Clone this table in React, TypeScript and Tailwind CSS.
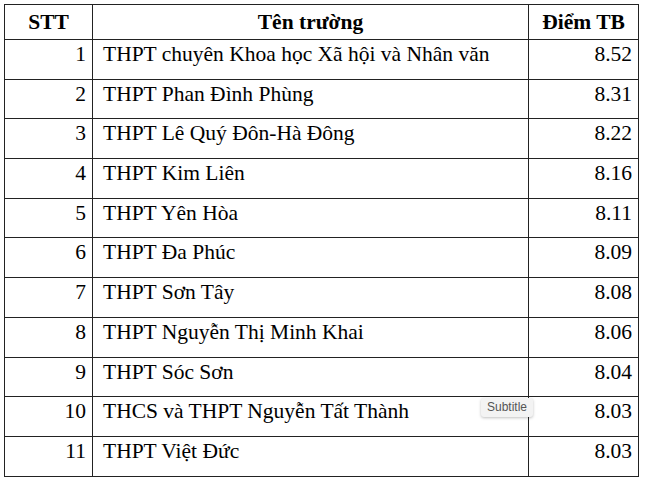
const rows: [number, string, string][] = [
  [1, 'THPT chuyên Khoa học Xã hội và Nhân văn', '8.52'],
  [2, 'THPT Phan Đình Phùng', '8.31'],
  [3, 'THPT Lê Quý Đôn-Hà Đông', '8.22'],
  [4, 'THPT Kim Liên', '8.16'],
  [5, 'THPT Yên Hòa', '8.11'],
  [6, 'THPT Đa Phúc', '8.09'],
  [7, 'THPT Sơn Tây', '8.08'],
  [8, 'THPT Nguyễn Thị Minh Khai', '8.06'],
  [9, 'THPT Sóc Sơn', '8.04'],
  [10, 'THCS và THPT Nguyễn Tất Thành', '8.03'],
  [11, 'THPT Việt Đức', '8.03'],
];

export default function App() {
  return (
    <div className="w-[645px] h-[483px] bg-white pt-[4px] pl-[4px] font-['Liberation_Serif','Times_New_Roman',serif] text-[21.5px] text-black">
      <table className="border-collapse table-fixed w-[634px]">
        <colgroup>
          <col className="w-[88px]" />
          <col className="w-[436px]" />
          <col className="w-[110px]" />
        </colgroup>
        <thead>
          <tr className="h-[35px]">
            <th className="border border-[#222] font-bold text-center align-middle">STT</th>
            <th className="border border-[#222] font-bold text-center align-middle">Tên trường</th>
            <th className="border border-[#222] font-bold text-center align-middle">Điểm TB</th>
          </tr>
        </thead>
        <tbody>
          {rows.map(([stt, name, score]) => (
            <tr key={stt} className="h-[39.7px]">
              <td className="border border-[#222] text-right align-top pt-[2px] pr-[6px] leading-[24px]">{stt}</td>
              <td className="relative border border-[#222] text-left align-top pt-[2px] pl-[10px] leading-[24px] whitespace-nowrap">
                {name}
                {stt === 10 && (
                  <span className="absolute left-[388px] top-[1px] rounded-[3px] bg-[#f3f3f3] px-[6px] py-[2px] font-['Liberation_Sans',Arial,sans-serif] text-[12px] leading-[15px] text-[#555] shadow-[0_1px_3px_rgba(0,0,0,0.25)]">
                    Subtitle
                  </span>
                )}
              </td>
              <td className="border border-[#222] text-right align-top pt-[2px] pr-[6px] leading-[24px]">{score}</td>
            </tr>
          ))}
        </tbody>
      </table>
    </div>
  );
}
